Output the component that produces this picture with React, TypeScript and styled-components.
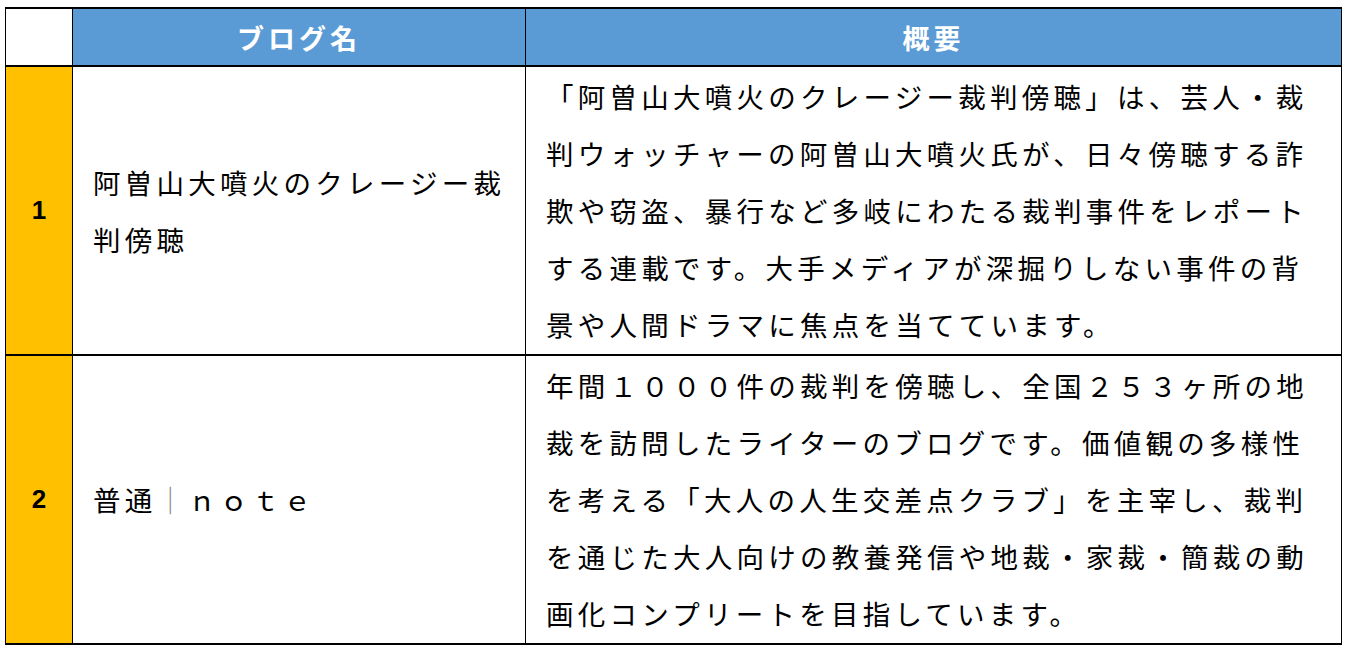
import * as React from "react";
import styled, { createGlobalStyle } from "styled-components";

const GlobalStyle = createGlobalStyle`
  html, body {
    margin: 0;
    padding: 0;
    background: #ffffff;
  }
  body {
    font-family: "Noto Sans CJK JP", "Noto Sans", sans-serif;
    color: #000000;
  }
`;

const Table = styled.table`
  margin: 7px 0 0 5px;
  width: 1336px;
  border-collapse: collapse;
  table-layout: fixed;
  border-top: 2px solid #000;
  border-bottom: 2px solid #000;
  border-left: 1px solid #000;
  border-right: 1px solid #000;
`;

const HeadRow = styled.tr`
  height: 58px;
  border-bottom: 2px solid #000;
`;

const BodyRow = styled.tr`
  border-bottom: 2px solid #000;
  &:last-child {
    border-bottom: none;
  }
`;

const HeadCell = styled.th<{ $blank?: boolean }>`
  padding: 0;
  border-left: 1px solid #000;
  background: ${(p) => (p.$blank ? "#ffffff" : "#5b9bd5")};
  color: #ffffff;
  font-size: 27px;
  font-weight: 700;
  letter-spacing: 4px;
  text-align: center;
  vertical-align: middle;
`;

const NumCell = styled.td`
  padding: 0;
  background: #ffc000;
  font-family: "Liberation Sans", "Noto Sans", sans-serif;
  font-size: 26px;
  font-weight: 700;
  text-align: center;
  vertical-align: middle;
`;

const TextCell = styled.td<{ $padRight: number }>`
  padding: 1px ${(p) => p.$padRight}px 1px 20px;
  border-left: 1px solid #000;
  font-size: 27.5px;
  line-height: 57px;
  letter-spacing: 4.25px;
  vertical-align: middle;
  word-break: break-all;
`;

const Bar = styled.span`
  color: #8a8a8a;
`;

const rows = [
  {
    no: "1",
    name: <>阿曽山大噴火のクレージー裁判傍聴</>,
    desc: "「阿曽山大噴火のクレージー裁判傍聴」は、芸人・裁判ウォッチャーの阿曽山大噴火氏が、日々傍聴する詐欺や窃盗、暴行など多岐にわたる裁判事件をレポートする連載です。大手メディアが深掘りしない事件の背景や人間ドラマに焦点を当てています。",
  },
  {
    no: "2",
    name: (
      <>
        普通<Bar>｜</Bar>ｎｏｔｅ
      </>
    ),
    desc: "年間１０００件の裁判を傍聴し、全国２５３ヶ所の地裁を訪問したライターのブログです。価値観の多様性を考える「大人の人生交差点クラブ」を主宰し、裁判を通じた大人向けの教養発信や地裁・家裁・簡裁の動画化コンプリートを目指しています。",
  },
];

export default function App() {
  return (
    <>
      <GlobalStyle />
      <Table>
        <colgroup>
          <col style={{ width: 67 }} />
          <col style={{ width: 453 }} />
          <col style={{ width: 816 }} />
        </colgroup>
        <thead>
          <HeadRow>
            <HeadCell $blank />
            <HeadCell>ブログ名</HeadCell>
            <HeadCell>概要</HeadCell>
          </HeadRow>
        </thead>
        <tbody>
          {rows.map((r) => (
            <BodyRow key={r.no}>
              <NumCell>{r.no}</NumCell>
              <TextCell $padRight={12}>{r.name}</TextCell>
              <TextCell $padRight={24}>{r.desc}</TextCell>
            </BodyRow>
          ))}
        </tbody>
      </Table>
    </>
  );
}
